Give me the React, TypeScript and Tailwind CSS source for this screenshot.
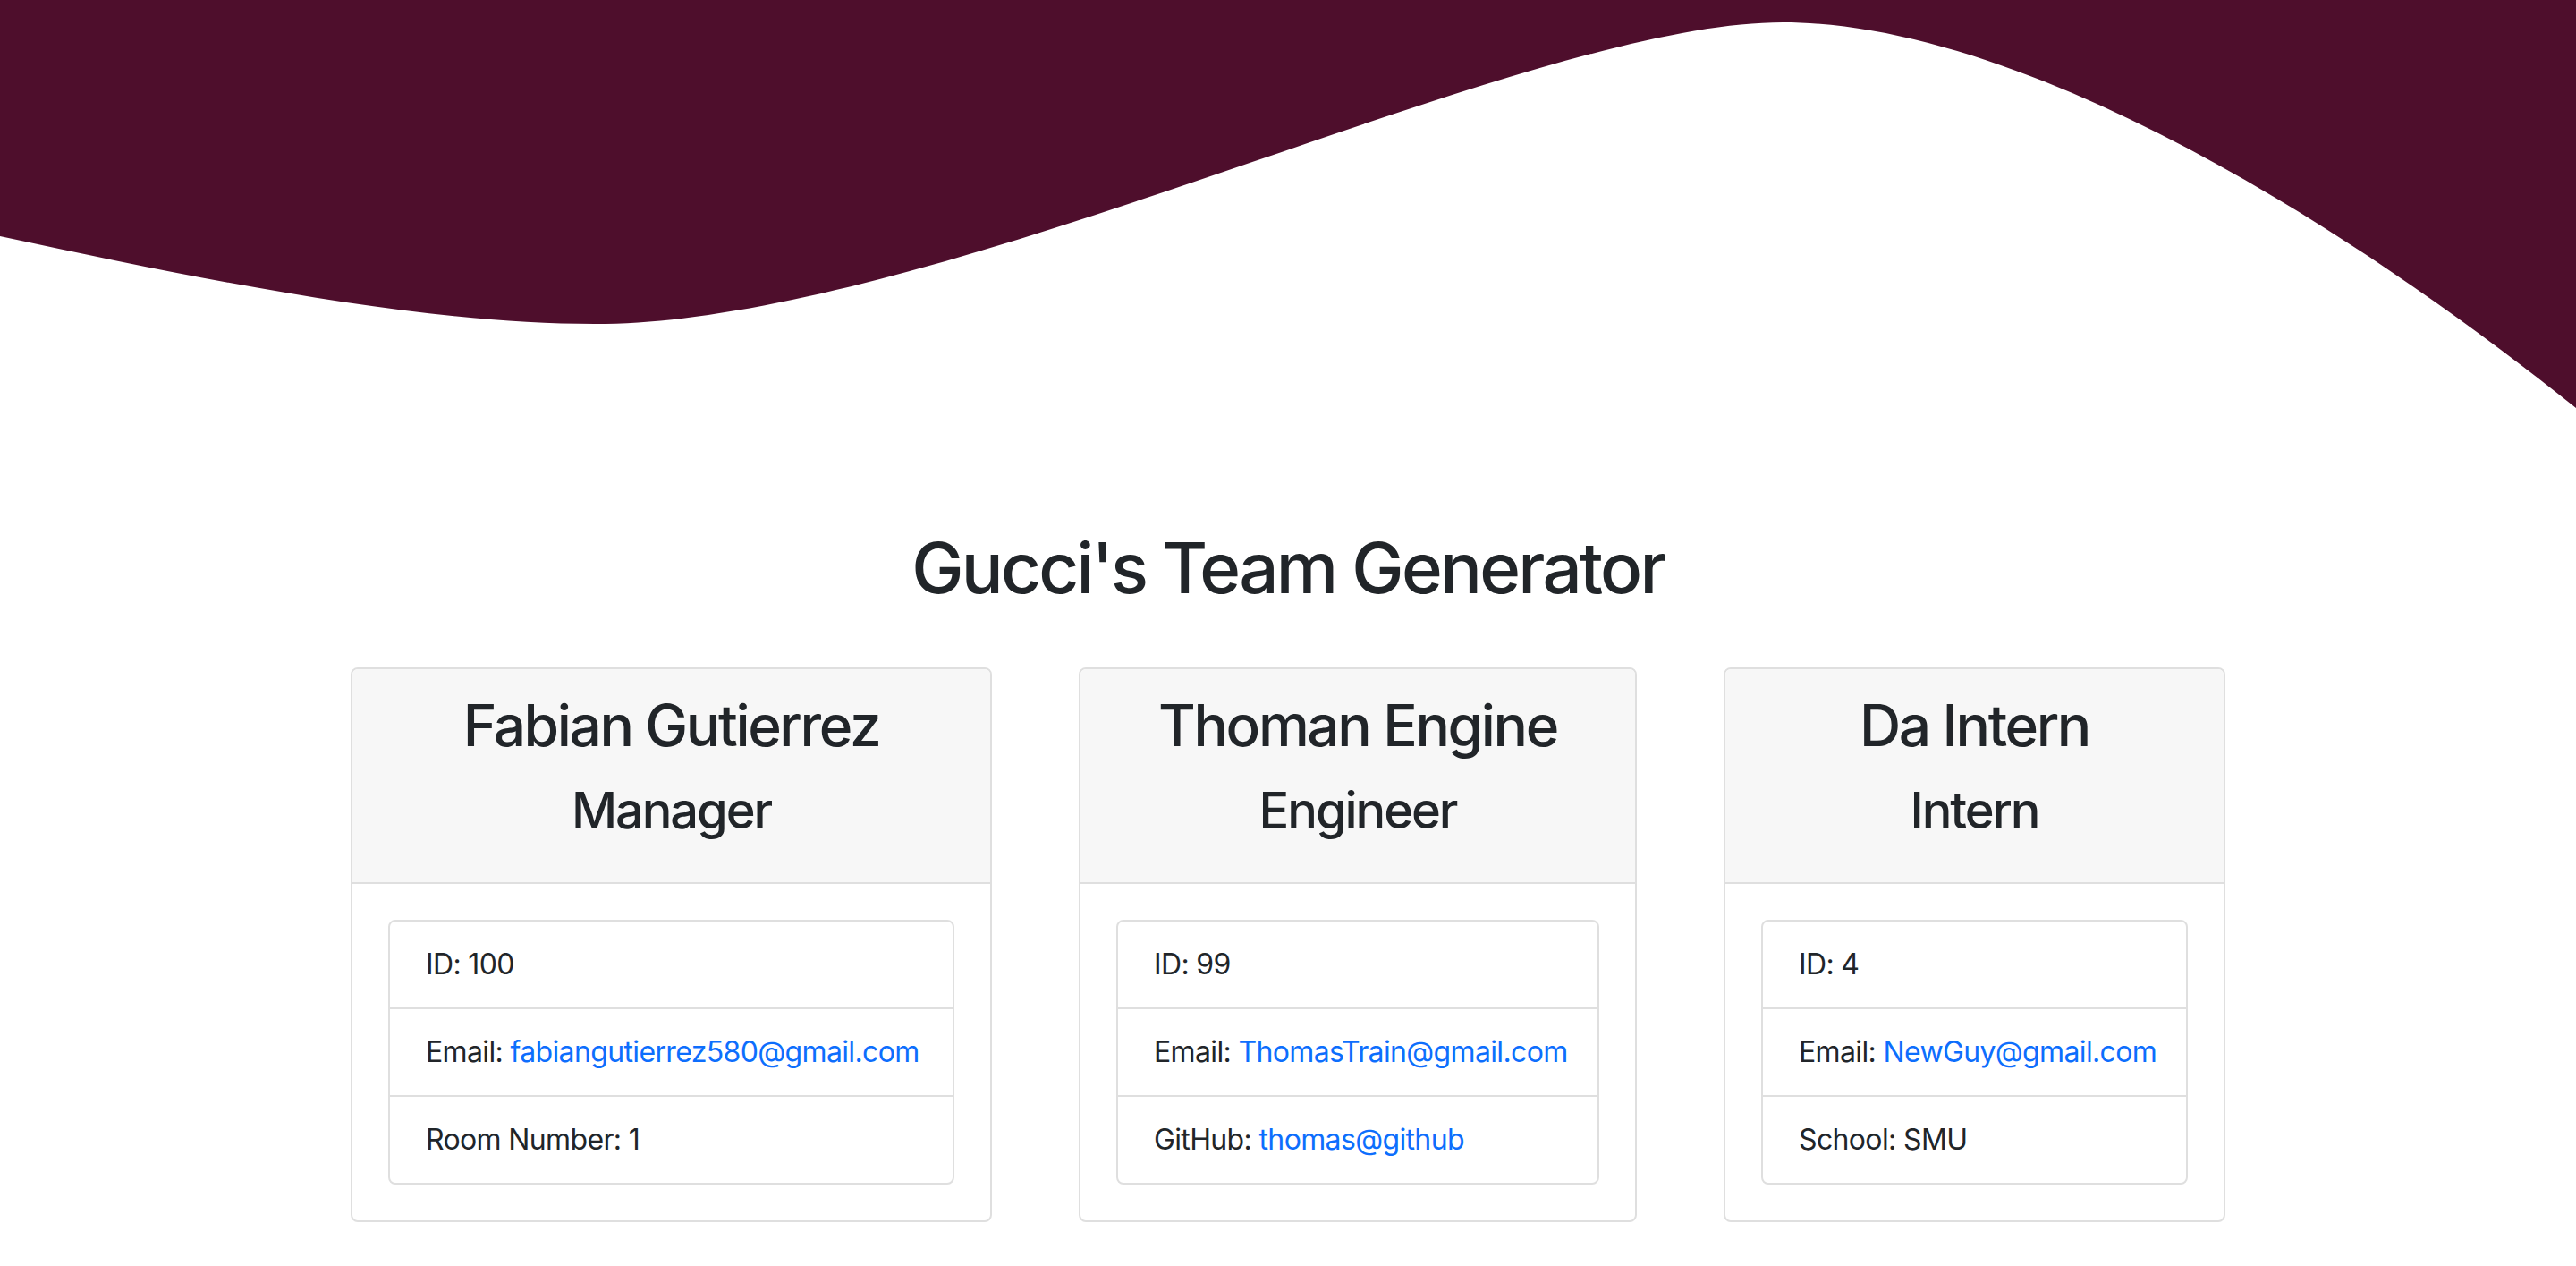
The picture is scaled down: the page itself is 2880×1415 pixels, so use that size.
import React from "react"

type Member = {
  name: string
  role: string
  id: number
  email: string
  extraLabel: string
  extraValue: string
  extraLink?: boolean
  width: string
}

const team: Member[] = [
  {
    name: "Fabian Gutierrez",
    role: "Manager",
    id: 100,
    email: "fabiangutierrez580@gmail.com",
    extraLabel: "Room Number",
    extraValue: "1",
    width: "w-[717px]",
  },
  {
    name: "Thoman Engine",
    role: "Engineer",
    id: 99,
    email: "ThomasTrain@gmail.com",
    extraLabel: "GitHub",
    extraValue: "thomas@github",
    extraLink: true,
    width: "w-[624px]",
  },
  {
    name: "Da Intern",
    role: "Intern",
    id: 4,
    email: "NewGuy@gmail.com",
    extraLabel: "School",
    extraValue: "SMU",
    width: "w-[561px]",
  },
]

function Wave() {
  return (
    <svg
      viewBox="0 0 2880 460"
      preserveAspectRatio="none"
      className="block w-full h-[460px]"
    >
      <path
        fill="#4e0e2c"
        d="M0,0 L0,264 C250,318 480,362 665,362 C1050,362 1700,25 1993,25 C2250,25 2600,232 2880,456 L2880,0 Z"
      />
    </svg>
  )
}

function Card({ m }: { m: Member }) {
  return (
    <div className={`${m.width} shrink-0 rounded-[8px] border-2 border-[#dfdfdf] bg-white overflow-hidden`}>
      <div className="bg-[#f7f7f7] border-b-2 border-[#dfdfdf] pt-[24px] pb-[46px] text-center">
        <h2 className="text-[64px] leading-[77px] font-[540] tracking-[-0.037em]">{m.name}</h2>
        <h3 className="mt-[24px] text-[56px] leading-[67px] font-[540] tracking-[-0.037em]">{m.role}</h3>
      </div>
      <div className="p-[40px]">
        <ul className="rounded-[8px] border-2 border-[#dfdfdf] text-[32px] leading-[48px] tracking-[-0.02em]">
          <li className="px-[40px] py-[24px]">ID: {m.id}</li>
          <li className="px-[40px] py-[24px] border-t-2 border-[#dfdfdf] whitespace-nowrap">
            Email: <a href={`mailto:${m.email}`} className="text-[#0d6efd]">{m.email}</a>
          </li>
          <li className="px-[40px] py-[24px] border-t-2 border-[#dfdfdf] whitespace-nowrap">
            {m.extraLabel}:{" "}
            {m.extraLink ? (
              <a href="#" className="text-[#0d6efd]">{m.extraValue}</a>
            ) : (
              m.extraValue
            )}
          </li>
        </ul>
      </div>
    </div>
  )
}

export default function App() {
  return (
    <div className="min-h-screen bg-white text-[#212529] font-['Inter','Liberation_Sans',sans-serif]">
      <Wave />
      <h1 className="mt-[127px] text-center text-[78px] leading-[96px] font-[540] tracking-[-0.035em]">
        Gucci's Team Generator
      </h1>
      <div className="mt-[63px] flex justify-center gap-[97px]">
        {team.map((m) => (
          <Card key={m.name} m={m} />
        ))}
      </div>
    </div>
  )
}
